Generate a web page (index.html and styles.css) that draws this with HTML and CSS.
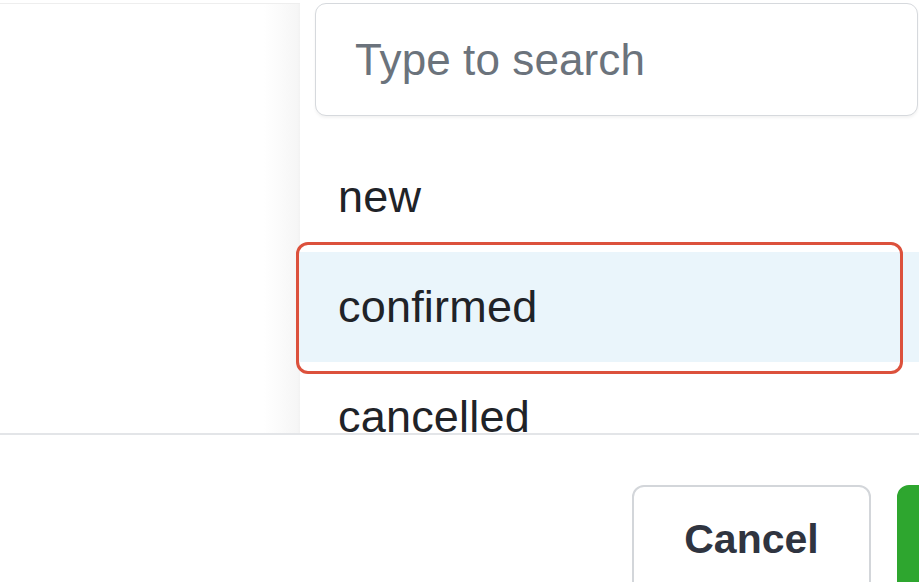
FILE: index.html
```html
<!DOCTYPE html>
<html lang="en">
<head>
<meta charset="utf-8">
<title>Select status</title>
<link rel="stylesheet" href="styles.css">
</head>
<body>
<div class="dialog">
  <div class="dialog-body">
    <aside class="side"></aside>
    <section class="picker">
      <div class="search">
        <input class="search-input" type="text" placeholder="Type to search">
      </div>
      <ul class="options">
        <li class="option">new</li>
        <li class="option option-active">confirmed</li>
        <li class="option">cancelled</li>
      </ul>
    </section>
  </div>
  <footer class="dialog-footer">
    <button class="btn">Cancel</button>
    <button class="btn btn-primary" aria-label="Apply"></button>
  </footer>
  <div class="highlight"></div>
</div>
</body>
</html>
```

FILE: styles.css
```css
* { box-sizing: border-box; }

html, body {
  margin: 0;
  padding: 0;
  background: #ffffff;
  overflow: hidden;
}

body {
  font-family: "Liberation Sans", Arial, sans-serif;
  color: #1f2328;
  width: 919px;
  height: 582px;
}

.dialog {
  position: relative;
  width: 919px;
  height: 582px;
  overflow: hidden;
}

.dialog-body {
  display: flex;
  height: 435px;
  border-bottom: 2px solid #e3e5e8;
  overflow: hidden;
}

.side {
  width: 300px;
  flex: none;
  margin-top: 3px;
  border-top: 1px solid #eeeeee;
  background: linear-gradient(to right, #ffffff 88%, #f6f6f6 99%, #f2f2f2 100%);
}

.picker {
  flex: 1;
  min-width: 0;
}

.search {
  padding: 3px 1px 0 15px;
}

.search-input {
  display: block;
  width: 100%;
  height: 113px;
  border: 1.5px solid #d6d9dd;
  border-radius: 11px;
  padding: 0 0 0 39px;
  font-family: "Liberation Sans", Arial, sans-serif;
  font-size: 44px;
  letter-spacing: 0.1px;
  color: #1f2328;
  background: #ffffff;
  box-shadow: 0 2px 3px rgba(0, 0, 0, 0.05);
  outline: none;
}

.search-input::placeholder {
  color: #6b737c;
}

.options {
  list-style: none;
  margin: 26px 0 0;
  padding: 0;
}

.option {
  height: 110px;
  line-height: 110px;
  padding-left: 38px;
  font-size: 45px;
  letter-spacing: 0.2px;
  color: #1f2328;
  white-space: nowrap;
}

.option-active {
  background: #eaf5fb;
}

.dialog-footer {
  display: flex;
  justify-content: flex-end;
  gap: 26px;
  padding-top: 50px;
}

.btn {
  flex: none;
  width: 239px;
  height: 110px;
  border: 2px solid #d3d6da;
  border-radius: 12px;
  background: #ffffff;
  font-family: "Liberation Sans", Arial, sans-serif;
  font-weight: 700;
  font-size: 41px;
  color: #2f3440;
  padding: 0 0 2px;
}

.btn-primary {
  width: 240px;
  margin-right: -218px;
  background: #2ea62f;
  border-color: #2ea62f;
}

.highlight {
  position: absolute;
  left: 296px;
  top: 242px;
  width: 607px;
  height: 132px;
  border: 3px solid #dc513c;
  border-radius: 12px;
  pointer-events: none;
}
```
